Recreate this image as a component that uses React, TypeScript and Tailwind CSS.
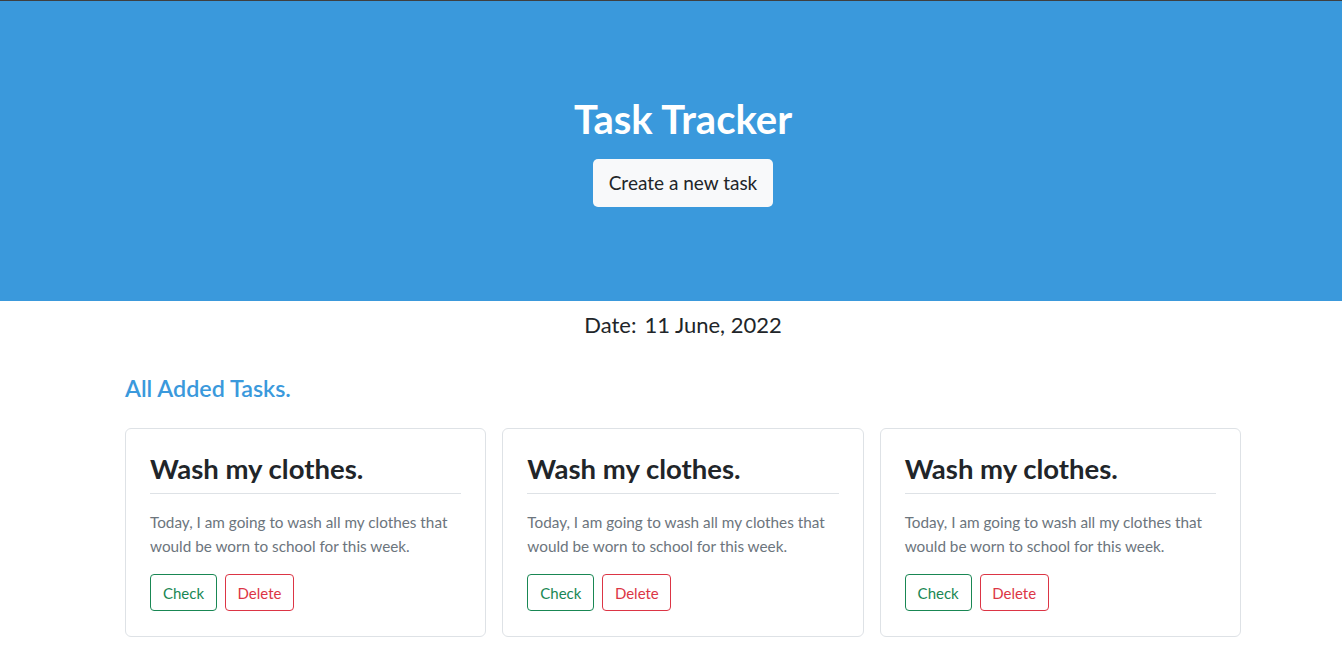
import React from "react";

type Task = {
  title: string;
  body: string;
};

const tasks: Task[] = [
  { title: "Wash my clothes.", body: "Today, I am going to wash all my clothes that would be worn to school for this week." },
  { title: "Wash my clothes.", body: "Today, I am going to wash all my clothes that would be worn to school for this week." },
  { title: "Wash my clothes.", body: "Today, I am going to wash all my clothes that would be worn to school for this week." },
];

const TaskCard: React.FC<{ task: Task }> = ({ task }) => (
  <div className="h-[209px] rounded-md border border-[#dee2e6] bg-white px-6 pt-[23px]">
    <h2 className="border-b border-[#dee2e6] pb-[7px] text-[27.5px] font-bold leading-[34px] text-[#212529]">
      {task.title}
    </h2>
    <p className="mt-[16px] text-[15.3px] leading-6 text-[#6c757d]">{task.body}</p>
    <div className="mt-4 flex gap-2">
      <button
        type="button"
        className="h-[37px] w-[67px] rounded border border-[#198754] pt-[1px] text-[15px] text-[#198754]"
      >
        Check
      </button>
      <button
        type="button"
        className="h-[37px] w-[69px] rounded border border-[#dc3545] pt-[1px] text-[15px] text-[#dc3545]"
      >
        Delete
      </button>
    </div>
  </div>
);

export default function App() {
  return (
    <div className="min-h-[664px] bg-white font-['Lato',sans-serif] text-[#212529]">
      {/* Header */}
      <header className="flex h-[301px] flex-col items-center border-t border-[#3f3f3f] bg-[#3a99dc] pl-6 pt-[94px]">
        <h1 className="text-[40px] font-bold leading-[48px] text-white">Task Tracker</h1>
        <button
          type="button"
          className="mt-[16px] h-12 w-[180px] rounded-[5px] bg-[#f8f9fa] text-[19px] text-[#212529]"
        >
          Create a new task
        </button>
      </header>

      {/* Date */}
      <div className="flex justify-center gap-[8px] pl-6 pt-[9px] text-[22px] leading-[30px]">
        <span>Date:</span>
        <span>11 June, 2022</span>
      </div>

      {/* Tasks */}
      <section className="ml-[125px] w-[1116px] pt-[33px]">
        <h3 className="text-[23.3px] font-semibold leading-[30px] text-[#3a99dc]">All Added Tasks.</h3>
        <div className="mt-[25px] grid grid-cols-3 gap-4">
          {tasks.map((task, i) => (
            <TaskCard key={i} task={task} />
          ))}
        </div>
      </section>
    </div>
  );
}
